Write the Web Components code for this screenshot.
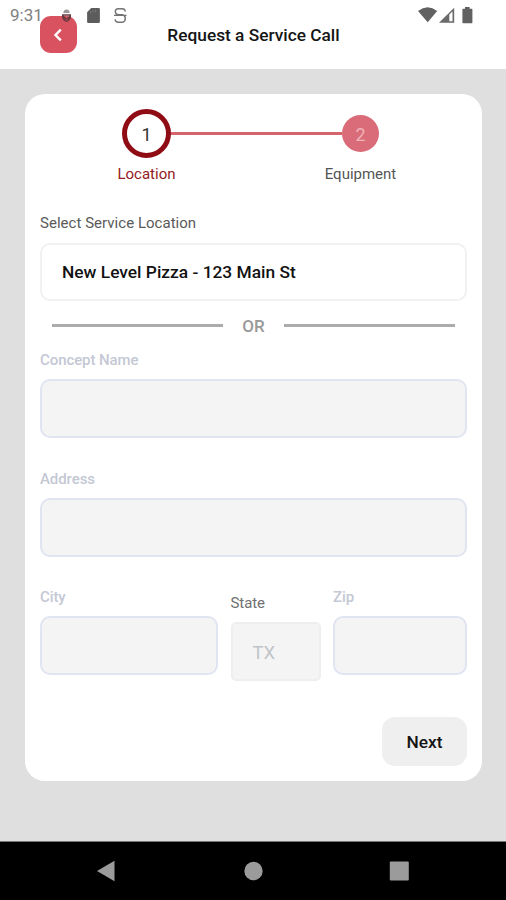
<!DOCTYPE html>
<html lang="en">
<head>
<meta charset="utf-8">
<title>Request a Service Call</title>
<style>
html, body { margin: 0; height: 100%; }
body { font-family: Roboto, "Liberation Sans", sans-serif; background: #dfdfdf; overflow: hidden; }
</style>
</head>
<body>
<service-app></service-app>
<script>
const define = (name, html) => customElements.define(name, class extends HTMLElement {
  constructor() {
    super();
    const t = document.createElement('template');
    t.innerHTML = html;
    this.attachShadow({ mode: 'open' }).append(t.content.cloneNode(true));
  }
});

define('status-bar', `
<style>
:host { position: absolute; inset: 0 0 auto 0; height: 31px; display: flex; align-items: center; justify-content: space-between; box-sizing: border-box; padding: 0 32px 0 10px; color: #808080; }
.left { display: flex; align-items: center; font-size: 17px; line-height: 31px; }
svg { display: block; }
</style>
<div class="left"><span>9:31</span>
<svg width="90" height="31" viewBox="43 0 90 31">
  <path fill="#999" d="M63.3 13a3.2 3.6 0 0 1 6.4 0z"/>
  <path fill="#6b3a40" fill-rule="evenodd" d="M62 14.3h9v3q-.8 3.6-4.5 4.8q-3.7-1.2-4.5-4.8zM63.6 15.7l2.9 2.6 2.9-2.6zM64.3 18.6l2.2 2 2.2-2-2.2 1z"/>
  <path fill="#5c5c5c" d="M91.2 8h7.5q1.2 0 1.2 1.2v12.6q0 1.2-1.2 1.2H88.3q-1.2 0-1.2-1.2v-9.6z"/>
  <path d="M90.5 11v2.5M93 9.8v2.5M95.5 9.8v2.5" stroke="#777" stroke-width="1"/>
  <path fill="none" stroke="#747474" stroke-width="1.4" d="M125.3 11.5q-.3-2.8-3-2.8h-4q-3 0-3 2.8t3 3.2h4q3 .4 3 3.7t-3 3.8h-4q-3 0-3.2-3M114 15.4h12.5"/>
</svg></div>
<svg width="56" height="31" viewBox="418 0 56 31">
  <path fill="#616161" d="M418 10.9q9.7-7.3 19.2 0L427.7 22.3z"/>
  <path fill="#6a6a6a" fill-rule="evenodd" d="M439 22.8L454.2 7.8v15zM449.3 14.6v6.6h3.2v-9.8z"/>
  <path fill="#616161" d="M465 7h4.6v1.8h2q.8 0 .8.8v12.8q0 .8-.8.8h-8.4q-.8 0-.8-.8V9.6q0-.8.8-.8H465z"/>
</svg>`);

define('back-button', `
<style>
:host { display: flex; width: 37px; height: 37px; border-radius: 11px; background: #d8535f; align-items: center; justify-content: center; }
</style>
<svg width="37" height="37" viewBox="0 0 37 37"><path d="M20.8 13.7l-5.3 5.3 5.3 5.3" fill="none" stroke="#fff" stroke-width="2.4"/></svg>`);

define('app-header', `
<style>
:host { display: grid; grid-template-columns: 1fr auto 1fr; height: 69px; box-sizing: border-box; padding: 16px 39px 0 40px; align-items: start; background: #fff; }
.title { font-size: 17.3px; font-weight: 500; line-height: 39px; color: #151515; white-space: nowrap; }
</style>
<back-button></back-button><div class="title"><slot></slot></div>`);

define('step-item', `
<style>
:host { display: flex; flex-direction: column; align-items: center; width: 90px; color: #555; }
.ring { height: 49px; display: flex; align-items: center; }
.dot { box-sizing: border-box; width: 37px; height: 37px; border-radius: 50%; background: #da6b78; color: #f0b4b9; display: flex; align-items: center; justify-content: center; font-size: 18px; padding-top: 2px; }
:host([active]) { color: #951a24; }
:host([active]) .dot { width: 49px; height: 49px; border: 5px solid #900c15; background: #fff; color: #333; }
.label { font-size: 15px; line-height: 20px; margin-top: 6px; }
</style>
<div class="ring"><div class="dot"><slot name="number"></slot></div></div>
<div class="label"><slot></slot></div>`);

define('step-progress', `
<style>
:host { display: flex; justify-content: center; align-items: flex-start; height: 76px; }
.line { width: 171px; height: 3px; margin: 23px -26px 0 -21px; background: #d7636b; flex: none; }
</style>
<step-item active><span slot="number">1</span>Location</step-item>
<div class="line"></div>
<step-item><span slot="number">2</span>Equipment</step-item>`);

define('form-field', `
<style>
:host { display: block; color: #c4c8d4; font-weight: 500; }
.label { font-size: 15px; line-height: 20px; letter-spacing: -.08px; }
.box { box-sizing: border-box; height: 59px; margin-top: 9px; border: 2px solid #e1e5f2; border-radius: 10px; background: #f4f4f4; display: flex; align-items: center; padding-left: 20px; white-space: nowrap; }
:host([variant=select]) { color: #5a5a5a; font-weight: 400; }
:host([variant=select]) .label { letter-spacing: .03px; line-height: 21px; }
:host([variant=select]) .box { height: 58px; border-color: #f1f1f1; background: #fff; color: #111; font-weight: 500; font-size: 17.35px; }
:host([variant=disabled]) { color: #707070; font-weight: 400; margin-top: 6px; }
:host([variant=disabled]) .label { line-height: 21px; margin-bottom: -1px; }
:host([variant=disabled]) .box { border-color: #eeeeef; border-radius: 5px; color: #c1c4c9; font-size: 18.5px; padding-top: 2px; }
</style>
<div class="label"><slot name="label"></slot></div>
<div class="box"><slot></slot></div>`);

define('or-divider', `
<style>
:host { display: flex; align-items: center; justify-content: space-between; height: 20px; padding: 0 12px; font-size: 17px; font-weight: 500; color: #999; }
i { width: 171px; height: 3px; background: #acacac; }
span { padding-top: 1px; }
</style>
<i></i><span><slot></slot></span><i></i>`);

define('action-button', `
<style>
:host { display: flex; width: 85px; height: 49px; border-radius: 13px; background: #efefef; color: #151515; font-size: 17.3px; font-weight: 500; align-items: center; justify-content: center; box-sizing: border-box; padding-top: 1px; }
</style><slot></slot>`);

define('form-card', `
<style>
:host { display: block; box-sizing: border-box; margin: 25px 24px 0 25px; height: 687px; padding: 15px 15px 0; border-radius: 20px; background: #fff; }
.select { margin-top: 28px; }
or-divider { margin-top: 14px; }
.a { margin-top: 15px; }
.b { margin-top: 30.5px; }
.row { display: grid; grid-template-columns: 178px 90px 134px; column-gap: 12.5px; margin-top: 30.5px; }
.actions { display: flex; justify-content: flex-end; margin-top: 36px; }
</style>
<step-progress></step-progress>
<form-field class="select" variant="select"><span slot="label">Select Service Location</span>New Level Pizza - 123 Main St</form-field>
<or-divider>OR</or-divider>
<form-field class="a"><span slot="label">Concept Name</span></form-field>
<form-field class="b"><span slot="label">Address</span></form-field>
<div class="row">
<form-field><span slot="label">City</span></form-field>
<form-field variant="disabled"><span slot="label">State</span>TX</form-field>
<form-field><span slot="label">Zip</span></form-field>
</div>
<div class="actions"><action-button>Next</action-button></div>`);

define('nav-bar', `
<style>
:host { display: grid; grid-template-columns: 1fr 1fr 1fr; justify-items: center; align-items: center; height: 59px; box-sizing: border-box; padding: 0 34px; border-top: 1px solid #777; background: #000; }
svg { display: block; }
</style>
<svg width="20" height="22"><path d="M0 11L17.5 .8v20.5z" fill="#9b9b9b"/></svg>
<svg width="20" height="20"><circle cx="10.5" cy="10" r="9.2" fill="#9b9b9b"/></svg>
<svg width="20" height="20"><rect x=".8" y=".5" width="19" height="19" rx="1" fill="#9b9b9b"/></svg>`);

define('service-app', `
<style>
:host { display: flex; flex-direction: column; position: relative; width: 506px; height: 900px; background: #dfdfdf; }
nav-bar { margin-top: auto; }
</style>
<app-header>Request a Service Call</app-header>
<form-card></form-card>
<nav-bar></nav-bar>
<status-bar></status-bar>`);
</script>
</body>
</html>
